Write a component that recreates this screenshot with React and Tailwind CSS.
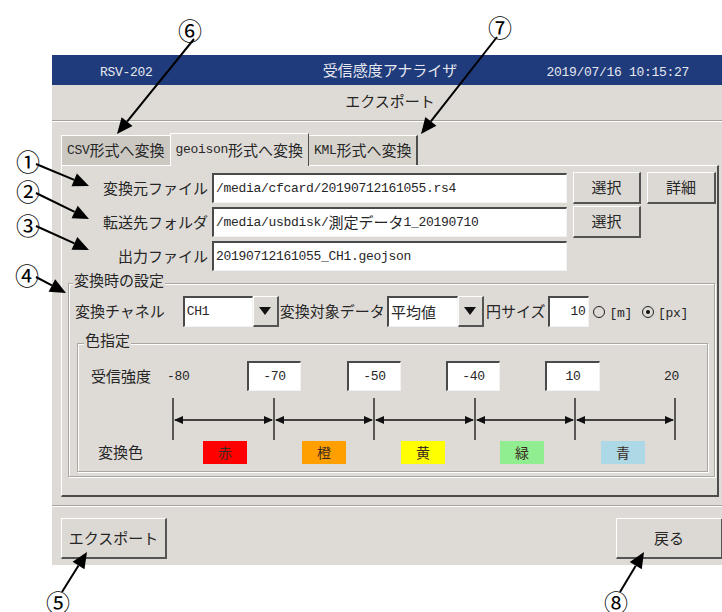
import React from "react";

const JP = "font-['Noto_Sans_CJK_JP',sans-serif] text-[15px]";

// latin runs in a half-width mono face, kanji/kana in the gothic face
const Txt = ({ text }) =>
  text
    .split(/([^\x00-\x7f]+)/)
    .filter(Boolean)
    .map((s, i) =>
      /[^\x00-\x7f]/.test(s) ? (
        <span key={i} className="font-['Noto_Sans_CJK_JP',sans-serif] text-[15px] tracking-normal">
          {s}
        </span>
      ) : (
        <span key={i} className="font-['Liberation_Mono',monospace] text-[13px] tracking-[-0.3px] whitespace-pre">
          {s}
        </span>
      )
    );

const Btn = ({ children, className = "" }) => (
  <div
    className={`flex items-center justify-center bg-[#dcd9d4] border-t border-l border-t-white border-l-white border-r-2 border-b-2 border-r-[#545454] border-b-[#545454] ${className}`}
  >
    {children}
  </div>
);

const Field = ({ children, className = "" }) => (
  <div
    className={`flex items-center bg-white border-t-2 border-l-2 border-t-[#4a4a4a] border-l-[#4a4a4a] border-r border-b border-r-[#f2f2f2] border-b-[#f2f2f2] ${className}`}
  >
    {children}
  </div>
);

const Combo = ({ value, w }) => (
  <div className="flex h-[31px]">
    <Field className={`${w} h-full pl-[2px]`}>
      <Txt text={value} />
    </Field>
    <Btn className="w-[26px] h-full">
      <svg width="12" height="8" viewBox="0 0 12 8">
        <polygon points="0,0 12,0 6,8" fill="#111" />
      </svg>
    </Btn>
  </div>
);

const Radio = ({ checked }) => (
  <div className="w-[12px] h-[12px] rounded-full border border-[#222] flex items-center justify-center">
    {checked && <div className="w-[4px] h-[4px] rounded-full bg-[#111]" />}
  </div>
);

const ticks = [95, 196, 296, 397, 497, 597];

const ScaleArrows = () => (
  <svg width="630" height="42" className="mt-[7px] block">
    {ticks.map((x) => (
      <line key={x} x1={x} y1="0" x2={x} y2="42" stroke="#111" strokeWidth="1.3" />
    ))}
    {ticks.slice(0, -1).map((a, i) => {
      const b = ticks[i + 1];
      return (
        <g key={a}>
          <line x1={a + 2} y1="22" x2={b - 2} y2="22" stroke="#111" strokeWidth="1.3" />
          <polygon points={`${a + 1},22 ${a + 10},18 ${a + 10},26`} fill="#111" />
          <polygon points={`${b - 1},22 ${b - 10},18 ${b - 10},26`} fill="#111" />
        </g>
      );
    })}
  </svg>
);

const Swatch = ({ label, color, className }) => (
  <div className={`w-[44px] h-[23px] flex items-center justify-center ${color} ${className}`}>
    <span className="font-['Noto_Sans_CJK_JP',sans-serif] text-[14px] text-[#3a2a20]">{label}</span>
  </div>
);

const arrows = [
  [194, 39, 117, 134],
  [497, 37, 421, 134],
  [36, 164, 89, 186],
  [36, 193, 89, 219],
  [36, 226, 89, 250],
  [36, 277, 66, 293],
  [62, 592, 87, 552],
  [620, 592, 644, 552],
];

const marks = [
  ["⑥", 190, 30],
  ["⑦", 500, 27],
  ["①", 28, 161],
  ["②", 28, 191],
  ["③", 28, 225],
  ["④", 27, 275],
  ["⑤", 58, 602],
  ["⑧", 616, 602],
];

const Arrow = ({ x1, y1, x2, y2 }) => {
  const dx = x2 - x1;
  const dy = y2 - y1;
  const len = Math.hypot(dx, dy);
  const ux = dx / len;
  const uy = dy / len;
  const bx = x2 - ux * 16;
  const by = y2 - uy * 16;
  const pts = `${x2},${y2} ${bx - uy * 7},${by + ux * 7} ${bx + uy * 7},${by - ux * 7}`;
  return (
    <g>
      <line x1={x1} y1={y1} x2={bx} y2={by} stroke="#000" strokeWidth="2" />
      <polygon points={pts} fill="#000" />
    </g>
  );
};

export default function App() {
  return (
    <div className="relative w-[722px] h-[612px] overflow-hidden bg-white text-[#262626] pt-[55px] pl-[52px]">
      <div className="w-[676px] h-[510px] bg-[#dedbd6] flex flex-col">
        {/* title bar */}
        <div className="grid grid-cols-[1fr_auto_1fr] items-center h-[30px] shrink-0 bg-[#1f3b7c] text-[#e6e8f0]">
          <div className="pl-[48px]">
            <Txt text="RSV-202" />
          </div>
          <div className={JP}>受信感度アナライザ</div>
          <div className="justify-self-end pr-[39px]">
            <Txt text="2019/07/16 10:15:27" />
          </div>
        </div>

        <div className={`h-[35px] shrink-0 flex items-center justify-center pb-[2px] ${JP}`}>エクスポート</div>
        <div className="h-[2px] shrink-0 border-t border-t-[#a5a29d] border-b border-b-white" />

        {/* tabs */}
        <div className="flex items-end ml-[9px] mt-[11px] h-[32px] shrink-0">
          <div className="h-[30px] px-[5px] flex items-center bg-[#cbc8c2] border-t border-l border-t-white border-l-white">
            <Txt text="CSV形式へ変換" />
          </div>
          <div className="relative z-10 h-[33px] -mb-px px-[5px] flex items-center bg-[#dedbd6] border-t border-l border-r border-t-white border-l-white border-r-[#4d4d4d]">
            <Txt text="geoison形式へ変換" />
          </div>
          <div className="h-[30px] pl-[5px] pr-[4px] flex items-center bg-[#d6d3cd] border-t border-r-2 border-t-white border-r-[#4d4d4d]">
            <Txt text="KML形式へ変換" />
          </div>
        </div>

        {/* panel */}
        <div className="ml-[9px] w-[658px] h-[332px] shrink-0 flex flex-col pt-[6px] border-t border-l border-t-white border-l-white border-r-2 border-b-2 border-r-[#4d4d4d] border-b-[#4d4d4d]">
          <div className="flex flex-col gap-[2px]">
            <div className="flex items-center h-[32px]">
              <div className={`w-[146px] text-right ${JP}`}>変換元ファイル</div>
              <Field className="ml-[4px] w-[355px] h-[30px] pl-[2px]">
                <Txt text="/media/cfcard/20190712161055.rs4" />
              </Field>
              <Btn className={`ml-[6px] w-[68px] h-[32px] ${JP}`}>選択</Btn>
              <Btn className={`ml-[6px] w-[69px] h-[32px] ${JP}`}>詳細</Btn>
            </div>
            <div className="flex items-center h-[32px]">
              <div className={`w-[146px] text-right ${JP}`}>転送先フォルダ</div>
              <Field className="ml-[4px] w-[355px] h-[30px] pl-[2px]">
                <Txt text="/media/usbdisk/測定データ1_20190710" />
              </Field>
              <Btn className={`ml-[6px] w-[68px] h-[32px] ${JP}`}>選択</Btn>
            </div>
            <div className="flex items-center h-[32px]">
              <div className={`w-[146px] text-right ${JP}`}>出力ファイル</div>
              <Field className="ml-[4px] w-[355px] h-[30px] pl-[2px]">
                <Txt text="20190712161055_CH1.geojson" />
              </Field>
            </div>
          </div>

          {/* conversion settings group */}
          <div className="relative mt-[11px] ml-[6px] w-[647px] pt-[12px] pb-[4px] border border-[#aaa7a1] shadow-[inset_1px_1px_0_#fff,1px_1px_0_#fff]">
            <span className={`absolute left-[4px] -top-[13px] px-[1px] bg-[#dedbd6] leading-[18px] ${JP}`}>変換時の設定</span>
            <div className="flex items-center h-[31px] pl-[6px]">
              <span className={JP}>変換チャネル</span>
              <div className="ml-[18px]">
                <Combo value="CH1" w="w-[70px]" />
              </div>
              <span className={`ml-[1px] ${JP}`}>変換対象データ</span>
              <div className="ml-[2px]">
                <Combo value="平均値" w="w-[71px]" />
              </div>
              <span className={`ml-[2px] ${JP}`}>円サイズ</span>
              <Field className="ml-[3px] w-[41px] h-[31px] justify-end pr-[3px]">
                <Txt text="10" />
              </Field>
              <div className="ml-[4px]">
                <Radio />
              </div>
              <span className="ml-[4px]">
                <Txt text="[m]" />
              </span>
              <div className="ml-[10px]">
                <Radio checked />
              </div>
              <span className="ml-[4px]">
                <Txt text="[px]" />
              </span>
            </div>

            {/* colour group */}
            <div className="relative mt-[16px] ml-[8px] mr-[6px] pt-[17px] pb-[7px] border border-[#aaa7a1] shadow-[inset_1px_1px_0_#fff,1px_1px_0_#fff]">
              <span className={`absolute left-[6px] -top-[13px] px-[1px] bg-[#dedbd6] leading-[18px] ${JP}`}>色指定</span>
              <div className="flex items-center h-[30px]">
                <div className={`w-[89px] pl-[13px] ${JP}`}>受信強度</div>
                <div className="w-[80px] -mt-[3px]">
                  <Txt text="-80" />
                </div>
                <Field className="w-[54px] h-[30px] justify-center">
                  <Txt text="-70" />
                </Field>
                <Field className="ml-[46px] w-[54px] h-[30px] justify-center">
                  <Txt text="-50" />
                </Field>
                <Field className="ml-[45px] w-[54px] h-[30px] justify-center">
                  <Txt text="-40" />
                </Field>
                <Field className="ml-[45px] w-[55px] h-[30px] justify-center">
                  <Txt text="10" />
                </Field>
                <div className="ml-[64px] -mt-[3px]">
                  <Txt text="20" />
                </div>
              </div>
              <ScaleArrows />
              <div className="flex items-center h-[23px] mt-[1px]">
                <span className={`ml-[20px] w-[45px] ${JP}`}>変換色</span>
                <Swatch label="赤" color="bg-[#ff0000]" className="ml-[60px]" />
                <Swatch label="橙" color="bg-[#ffa000]" className="ml-[55px]" />
                <Swatch label="黄" color="bg-[#ffff00]" className="ml-[55px]" />
                <Swatch label="緑" color="bg-[#90ee90]" className="ml-[55px]" />
                <Swatch label="青" color="bg-[#add8e6]" className="ml-[57px]" />
              </div>
            </div>
          </div>
        </div>

        <div className="mt-[8px] h-[2px] shrink-0 border-t border-t-[#a5a29d] border-b border-b-white" />

        <div className="flex mt-[11px] h-[41px] shrink-0">
          <Btn className={`ml-[9px] w-[106px] h-full ${JP}`}>エクスポート</Btn>
          <Btn className={`ml-auto mr-[5px] w-[107px] h-full ${JP}`}>戻る</Btn>
        </div>
      </div>

      {/* manual annotations */}
      <svg className="absolute inset-0 pointer-events-none" width="722" height="612">
        {arrows.map(([x1, y1, x2, y2], i) => (
          <Arrow key={i} x1={x1} y1={y1} x2={x2} y2={y2} />
        ))}
      </svg>
      {marks.map(([n, x, y]) => (
        <span
          key={n}
          className="absolute w-[24px] h-[24px] flex items-center justify-center font-['Noto_Sans_CJK_JP',sans-serif] text-[24px] leading-none text-black"
          style={{ left: x - 12, top: y - 12 }}
        >
          {n}
        </span>
      ))}
    </div>
  );
}
